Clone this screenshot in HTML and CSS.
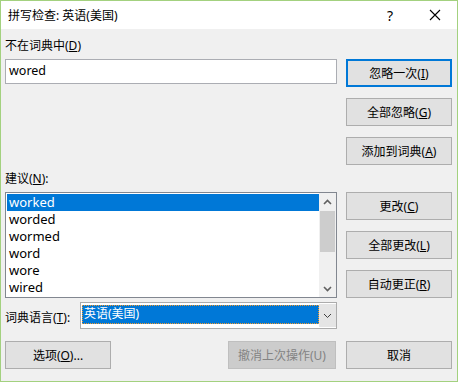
FILE: index.html
```html
<!DOCTYPE html>
<html lang="zh-CN">
<head>
    <meta charset="UTF-8">
    <title>拼写检查: 英语(美国)</title>
    <link rel="stylesheet" href="styles.css">
</head>
<body>
    <div class="dialog">
        <div class="titlebar">
            <span class="title">拼写检查: 英语(美国)</span>
            <span class="help">?</span>
            <span class="close">
                <svg width="12" height="12" viewBox="0 0 12 12"><path d="M1 1 L11 11 M11 1 L1 11" stroke="#000" stroke-width="1.1" fill="none"/></svg>
            </span>
        </div>

        <div class="content">
            <div class="label first">不在词典中(<u>D</u>)</div>
            <div></div>

            <div class="cell">
                <div class="textbox">wored</div>
            </div>
            <div class="btn-stack">
                <div class="btn default">忽略一次(<u>I</u>)</div>
                <div class="btn">全部忽略(<u>G</u>)</div>
                <div class="btn">添加到词典(<u>A</u>)</div>
            </div>

            <div class="label second">建议(<u>N</u>):</div>
            <div></div>

            <div class="listbox">
                <ul class="items">
                    <li class="selected">worked</li>
                    <li>worded</li>
                    <li>wormed</li>
                    <li>word</li>
                    <li>wore</li>
                    <li>wired</li>
                </ul>
                <div class="scrollbar">
                    <div class="arrow">
                        <svg width="9" height="6" viewBox="0 0 9 6"><path d="M1 5 L4.5 1.5 L8 5" stroke="#606060" stroke-width="1.6" fill="none"/></svg>
                    </div>
                    <div class="track">
                        <div class="thumb"></div>
                    </div>
                    <div class="arrow">
                        <svg width="9" height="6" viewBox="0 0 9 6"><path d="M1 1 L4.5 4.5 L8 1" stroke="#606060" stroke-width="1.6" fill="none"/></svg>
                    </div>
                </div>
            </div>
            <div class="btn-stack">
                <div class="btn">更改(<u>C</u>)</div>
                <div class="btn">全部更改(<u>L</u>)</div>
                <div class="btn">自动更正(<u>R</u>)</div>
            </div>

            <div class="lang-row">
                <span class="lang-label">词典语言(<u>T</u>):</span>
                <div class="combo">
                    <div class="combo-value"><span>英语(美国)</span></div>
                    <div class="combo-arrow">
                        <svg width="9" height="6" viewBox="0 0 9 6"><path d="M1 1 L4.5 4.5 L8 1" stroke="#404040" stroke-width="1" fill="none"/></svg>
                    </div>
                </div>
            </div>
            <div></div>

            <div class="bottom-left">
                <div class="btn">选项(<u>O</u>)...</div>
                <div class="btn disabled">撤消上次操作(U)</div>
            </div>
            <div class="bottom-right">
                <div class="btn">取消</div>
            </div>
        </div>
    </div>
</body>
</html>
```

FILE: styles.css
```css
* {
    box-sizing: border-box;
}
body {
    margin: 0;
    font-family: "Noto Sans", "Noto Sans CJK SC", sans-serif;
    font-size: 12px;
    color: #000;
}
.dialog {
    width: 458px;
    height: 382px;
    border: 1px solid #a3d17f;
    background-color: #f0f0f0;
}
.titlebar {
    height: 28px;
    background-color: #fff;
    display: flex;
    align-items: center;
    padding-left: 7px;
}
.title {
    flex: 1;
    font-size: 12px;
}
.help {
    width: 20px;
    font-size: 14px;
    margin-right: 22px;
}
.close {
    width: 12px;
    margin-right: 16px;
    display: flex;
}
.content {
    display: grid;
    grid-template-columns: 332px 106px;
    column-gap: 9px;
    padding-left: 4px;
}
.label {
    line-height: 16px;
    height: 30px;
}
.label.first {
    padding-top: 9px;
}
.label.second {
    height: 27px;
    padding-top: 6px;
}
u {
    text-decoration-thickness: 1px;
    text-underline-offset: 1px;
}
.textbox {
    height: 25px;
    background-color: #fff;
    border: 1px solid #abadb3;
    padding-left: 3px;
    line-height: 22px;
    font-size: 12.5px;
}
.btn-stack {
    display: flex;
    flex-direction: column;
    gap: 11px;
}
.btn {
    height: 28px;
    width: 106px;
    background-color: #e1e1e1;
    border: 1px solid #adadad;
    display: flex;
    align-items: center;
    justify-content: center;
}
.btn.default {
    border: 2px solid #0078d7;
}
.btn.disabled {
    width: 108px;
    background-color: #cccccc;
    border-color: #bfbfbf;
    color: #838383;
}
.listbox {
    height: 106px;
    border: 1px solid #828790;
    background-color: #fff;
    display: flex;
}
.items {
    list-style: none;
    margin: 0;
    padding: 1px 0 0 1px;
    flex: 1;
    font-size: 13px;
}
.items li {
    height: 17px;
    line-height: 16px;
    padding-left: 2px;
}
.items li.selected {
    background-color: #0078d7;
    color: #fff;
}
.scrollbar {
    width: 17px;
    background-color: #f0f0f0;
    display: flex;
    flex-direction: column;
}
.arrow {
    height: 17px;
    display: flex;
    align-items: center;
    justify-content: center;
}
.track {
    flex: 1;
}
.thumb {
    height: 41px;
    margin: 1px 1px 0 1px;
    background-color: #cdcdcd;
}
.lang-row {
    margin-top: 4px;
    display: flex;
    align-items: center;
}
.lang-label {
    width: 75px;
    padding-top: 2px;
}
.combo {
    width: 257px;
    height: 27px;
    border: 1px solid #acacac;
    background-color: #fff;
    display: flex;
    padding: 1px 0 1px 1px;
}
.combo-value {
    flex: 1;
    padding: 1px 0 3px 0;
}
.combo-value span {
    display: block;
    height: 19px;
    background-color: #0078d7;
    color: #fff;
    outline: 1px dotted #f39a2c;
    outline-offset: -1px;
    padding-left: 2px;
    line-height: 18px;
}
.combo-arrow {
    width: 17px;
    background-color: #e5e5e5;
    display: flex;
    align-items: center;
    justify-content: center;
}
.bottom-left {
    margin-top: 12px;
    display: flex;
    justify-content: space-between;
    padding-right: 1px;
}
.bottom-right {
    margin-top: 12px;
}
```
